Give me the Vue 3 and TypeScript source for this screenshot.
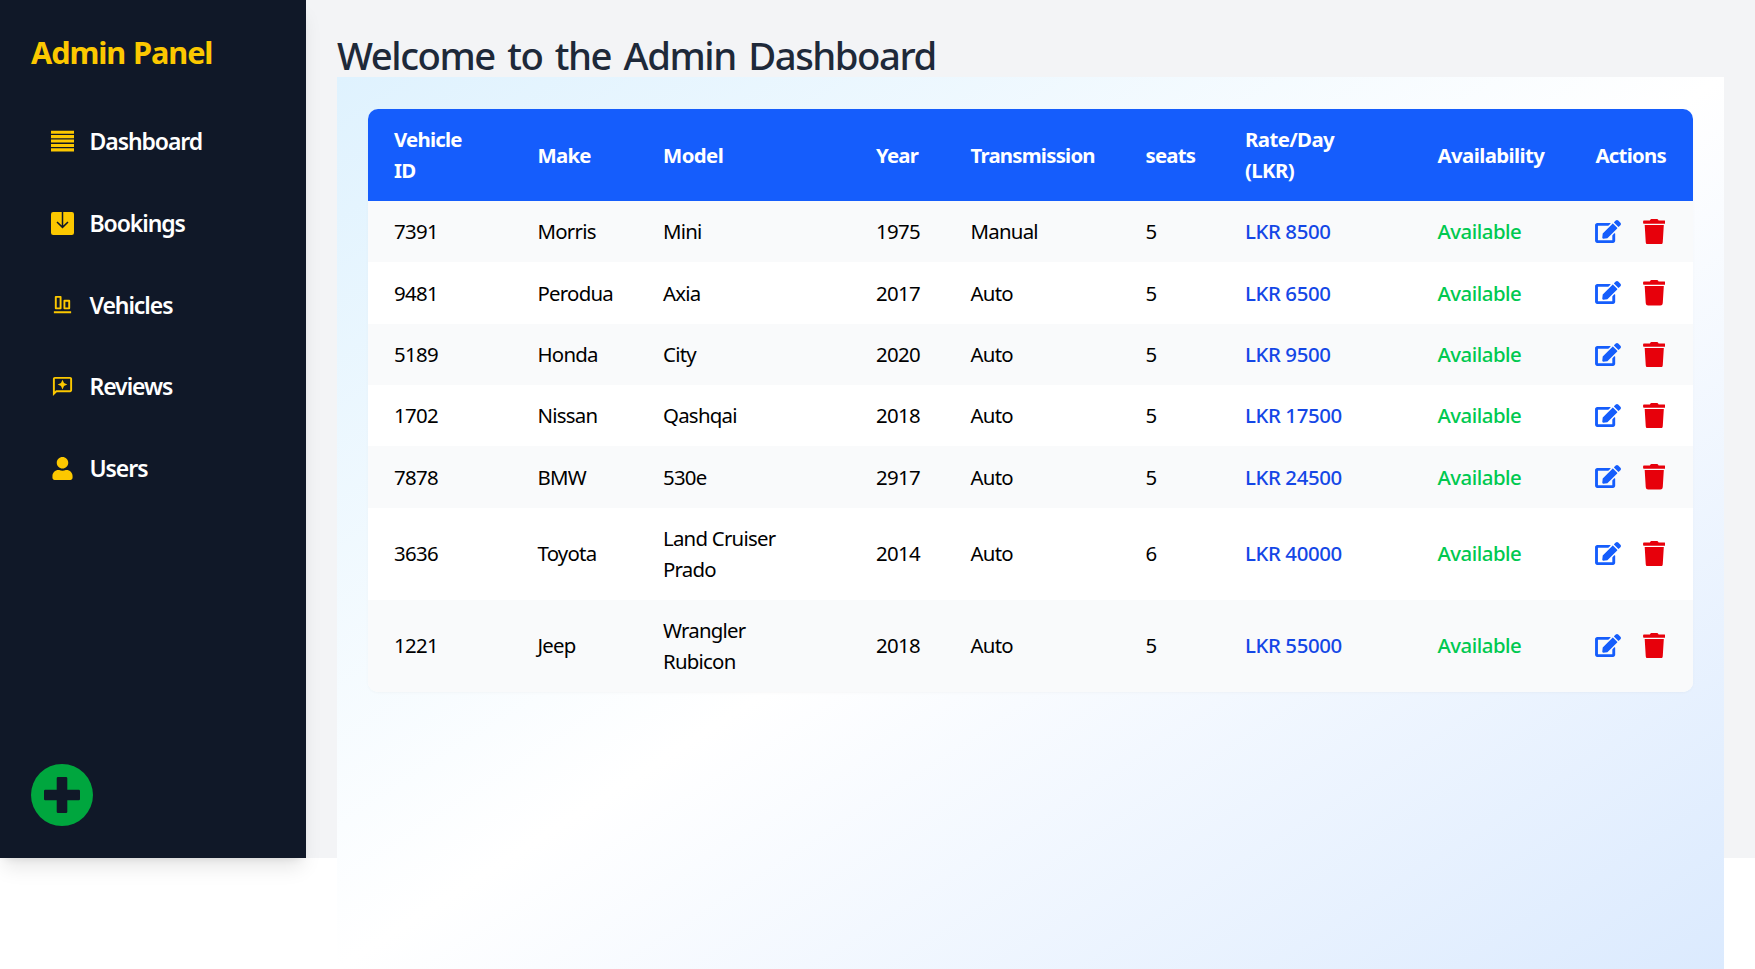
<script setup lang="ts">
interface Vehicle {
  id: string
  make: string
  model: string
  year: string
  transmission: string
  seats: number
  rate: number
}

const navItems = [
  { key: 'dashboard', label: 'Dashboard' },
  { key: 'bookings', label: 'Bookings' },
  { key: 'vehicles', label: 'Vehicles' },
  { key: 'reviews', label: 'Reviews' },
  { key: 'users', label: 'Users' },
]

const columns = ['Vehicle ID', 'Make', 'Model', 'Year', 'Transmission', 'seats', 'Rate/Day (LKR)', 'Availability', 'Actions']

const vehicles: Vehicle[] = [
  { id: '7391', make: 'Morris', model: 'Mini', year: '1975', transmission: 'Manual', seats: 5, rate: 8500 },
  { id: '9481', make: 'Perodua', model: 'Axia', year: '2017', transmission: 'Auto', seats: 5, rate: 6500 },
  { id: '5189', make: 'Honda', model: 'City', year: '2020', transmission: 'Auto', seats: 5, rate: 9500 },
  { id: '1702', make: 'Nissan', model: 'Qashqai', year: '2018', transmission: 'Auto', seats: 5, rate: 17500 },
  { id: '7878', make: 'BMW', model: '530e', year: '2917', transmission: 'Auto', seats: 5, rate: 24500 },
  { id: '3636', make: 'Toyota', model: 'Land Cruiser Prado', year: '2014', transmission: 'Auto', seats: 6, rate: 40000 },
  { id: '1221', make: 'Jeep', model: 'Wrangler Rubicon', year: '2018', transmission: 'Auto', seats: 5, rate: 55000 },
]
</script>

<template>
  <div class="viewport">
    <div class="layout">
      <aside class="sidebar">
        <h2 class="brand">Admin Panel</h2>
        <nav class="nav">
          <a v-for="item in navItems" :key="item.key" class="nav-item">
            <svg v-if="item.key === 'dashboard'" class="nav-icon" viewBox="0 0 23 23" fill="currentColor">
              <path d="M0 .7h23v3.1H0zM0 5.1h23v3.1H0zM0 9.5h23v3.1H0zM0 13.9h23v3.1H0zM0 18.3h23v3.1H0z" />
            </svg>
            <svg v-else-if="item.key === 'bookings'" class="nav-icon" viewBox="0 0 23 23">
              <rect width="23" height="23" rx="2.2" fill="currentColor" />
              <path d="M11.5 0v15.5M6 10l5.5 5.4L17 10" fill="none" stroke="#101828" stroke-width="1.5" />
            </svg>
            <svg v-else-if="item.key === 'vehicles'" class="nav-icon" viewBox="0 0 24 24" fill="currentColor">
              <path d="M3 19h18v2H3zM10 17H5a1 1 0 0 1-1-1V4a1 1 0 0 1 1-1h5a1 1 0 0 1 1 1v12a1 1 0 0 1-1 1zm-4-2h3V5H6zM19 17h-5a1 1 0 0 1-1-1V8a1 1 0 0 1 1-1h5a1 1 0 0 1 1 1v8a1 1 0 0 1-1 1zm-4-2h3V9h-3z" />
            </svg>
            <svg v-else-if="item.key === 'reviews'" class="nav-icon" viewBox="0 0 24 24" fill="currentColor">
              <path d="M20 2H4c-1.1 0-2 .9-2 2v18l4-4h14c1.1 0 2-.9 2-2V4c0-1.1-.9-2-2-2zm0 14H5.17L4 17.17V4h16v12zM12 15l1.57-3.43L17 10l-3.43-1.57L12 5l-1.57 3.43L7 10l3.43 1.57z" />
            </svg>
            <svg v-else class="nav-icon" viewBox="0 0 448 512" fill="currentColor">
              <path d="M224 256c70.7 0 128-57.3 128-128S294.7 0 224 0 96 57.3 96 128s57.3 128 128 128zm89.6 32h-16.7c-22.2 10.2-46.9 16-72.9 16s-50.6-5.8-72.9-16h-16.7C60.2 288 0 348.2 0 422.4V464c0 26.5 21.5 48 48 48h352c26.5 0 48-21.5 48-48v-41.6c0-74.2-60.2-134.4-134.4-134.4z" />
            </svg>
            <span>{{ item.label }}</span>
          </a>
        </nav>
        <button class="add" aria-label="Add vehicle">
          <svg viewBox="0 0 62 62">
            <circle cx="31" cy="31" r="31" fill="#00a63e" />
            <path d="M27 13h8a1.3 1.3 0 0 1 1.3 1.3v11.4h11.4A1.3 1.3 0 0 1 49 27v8a1.3 1.3 0 0 1-1.3 1.3H36.3v11.4A1.3 1.3 0 0 1 35 49h-8a1.3 1.3 0 0 1-1.3-1.3V36.3H14.3A1.3 1.3 0 0 1 13 35v-8a1.3 1.3 0 0 1 1.3-1.3h11.4V14.3A1.3 1.3 0 0 1 27 13z" fill="#101828" />
          </svg>
        </button>
      </aside>

      <main class="main">
        <h1 class="title">Welcome to the Admin Dashboard</h1>
        <section class="panel">
          <div class="card">
            <table class="table">
              <colgroup>
                <col v-for="(c, i) in columns" :key="c" :class="'col-' + i" />
              </colgroup>
              <thead>
                <tr>
                  <th v-for="c in columns" :key="c">{{ c }}</th>
                </tr>
              </thead>
              <tbody>
                <tr v-for="v in vehicles" :key="v.id">
                  <td class="num">{{ v.id }}</td>
                  <td>{{ v.make }}</td>
                  <td>{{ v.model }}</td>
                  <td class="num">{{ v.year }}</td>
                  <td>{{ v.transmission }}</td>
                  <td class="num">{{ v.seats }}</td>
                  <td class="rate">LKR {{ v.rate }}</td>
                  <td class="available">Available</td>
                  <td class="action-cell">
                    <div class="actions">
                      <svg class="edit" viewBox="0 0 576 512" fill="currentColor">
                        <path d="M402.6 83.2l90.2 90.2c3.8 3.8 3.8 10 0 13.8L274.4 405.6l-92.8 10.3c-12.4 1.4-22.9-9.1-21.5-21.5l10.3-92.8L388.8 83.2c3.8-3.8 10-3.8 13.8 0zm162-22.9l-48.8-48.8c-15.2-15.2-39.9-15.2-55.2 0l-35.4 35.4c-3.8 3.8-3.8 10 0 13.8l90.2 90.2c3.8 3.8 10 3.8 13.8 0l35.4-35.4c15.2-15.3 15.2-40 0-55.2zM384 346.2V448H64V128h229.8c3.2 0 6.2-1.3 8.5-3.5l40-40c7.6-7.6 2.2-20.5-8.5-20.5H48C21.5 64 0 85.5 0 112v352c0 26.5 21.5 48 48 48h352c26.5 0 48-21.5 48-48V306.2c0-10.7-12.9-16-20.5-8.5l-40 40c-2.2 2.3-3.5 5.3-3.5 8.5z" />
                      </svg>
                      <svg class="trash" viewBox="0 0 448 512" fill="currentColor">
                        <path d="M432 32H312l-9.4-18.7A24 24 0 0 0 281.1 0H166.8a23.72 23.72 0 0 0-21.4 13.3L136 32H16A16 16 0 0 0 0 48v32a16 16 0 0 0 16 16h416a16 16 0 0 0 16-16V48a16 16 0 0 0-16-16zM53.2 467a48 48 0 0 0 47.9 45h245.8a48 48 0 0 0 47.9-45L416 122H32z" />
                      </svg>
                    </div>
                  </td>
                </tr>
              </tbody>
            </table>
          </div>
        </section>
      </main>
    </div>
  </div>
</template>

<style>
body {
  background: #fff;
}
</style>

<style scoped>
.viewport {
  height: 969px;
  overflow: hidden;
}

.layout {
  display: flex;
  height: 858px;
  background: #f3f4f6;
  font-family: "Noto Sans", "Open Sans", sans-serif;
  font-size: 20.4px;
  line-height: 30.67px;
  color: #000;
}

.sidebar {
  box-sizing: border-box;
  flex: none;
  width: 306px;
  height: 858px;
  padding: 31px;
  display: flex;
  flex-direction: column;
  background: #101828;
  color: #fff;
  box-shadow: 0 13px 19px -4px rgba(0, 0, 0, 0.1), 0 5px 8px -5px rgba(0, 0, 0, 0.1);
}

.brand {
  margin: 0;
  font-size: 30.7px;
  font-weight: 700;
  line-height: 43px;
  letter-spacing: -1.1px;
  word-spacing: 1px;
  color: #fcc800;
}

.nav {
  display: flex;
  flex-direction: column;
  gap: 20px;
  margin-top: 36.5px;
}

.nav-item {
  display: flex;
  align-items: center;
  gap: 15.5px;
  height: 61.8px;
  padding-left: 20px;
  font-size: 23px;
  font-weight: 600;
  letter-spacing: -1.08px;
}

.nav-icon {
  width: 23px;
  height: 23px;
  color: #fcc800;
}

.add {
  width: 62px;
  height: 62px;
  margin: auto 0 1px;
  padding: 0;
  border: 0;
  background: none;
}

.add svg {
  display: block;
}

.main {
  flex: 1;
  min-width: 0;
  padding: 31px;
}

.title {
  margin: 0;
  padding-top: 2px;
  font-size: 38.3px;
  font-weight: 500;
  line-height: 44px;
  letter-spacing: -1.47px;
  word-spacing: 4px;
  color: #1e2939;
  white-space: nowrap;
}

.panel {
  box-sizing: border-box;
  height: 892px;
  padding: 32px 31px;
  background: linear-gradient(to bottom right, #dff2fe, #fff, #dbeafe);
}

.card {
  overflow: hidden;
  border-radius: 10px;
  background: #fff;
  box-shadow: 0 1px 3px rgba(0, 0, 0, 0.03);
}

.table {
  width: 100%;
  table-layout: fixed;
  border-collapse: collapse;
  text-align: left;
}

.col-0 { width: 143.5px; }
.col-1 { width: 125.5px; }
.col-2 { width: 213px; }
.col-3 { width: 94.5px; }
.col-4 { width: 175px; }
.col-5 { width: 99.5px; }
.col-6 { width: 192.5px; }
.col-7 { width: 158px; }
.col-8 { width: 123.5px; }

th,
td {
  padding: 15.33px 25px 15.33px 26px;
  vertical-align: middle;
}

th:nth-child(3),
td:nth-child(3),
th:nth-child(7),
td:nth-child(7) {
  padding-right: 56px;
}

th {
  background: #155dfc;
  color: #fff;
  font-weight: 700;
  letter-spacing: -0.78px;
}

th:nth-child(3),
th:nth-child(7),
th:nth-child(8) {
  letter-spacing: -0.6px;
}

td {
  letter-spacing: -0.75px;
}

tbody tr:nth-child(odd) {
  background: #f9fafb;
}

td.num {
  letter-spacing: -0.7px;
}

td.rate {
  color: #1447e6;
  font-weight: 500;
  letter-spacing: -0.4px;
  white-space: nowrap;
}

td.available {
  color: #00c950;
  font-weight: 500;
  letter-spacing: -0.5px;
}

td.action-cell {
  padding-left: 25px;
}

.actions {
  display: flex;
  align-items: center;
  gap: 22px;
  height: 30.67px;
}

.edit {
  flex: none;
  width: 26px;
  height: 23px;
  color: #155dfc;
}

.trash {
  flex: none;
  width: 22.5px;
  height: 25.5px;
  color: #e7000b;
}
</style>
